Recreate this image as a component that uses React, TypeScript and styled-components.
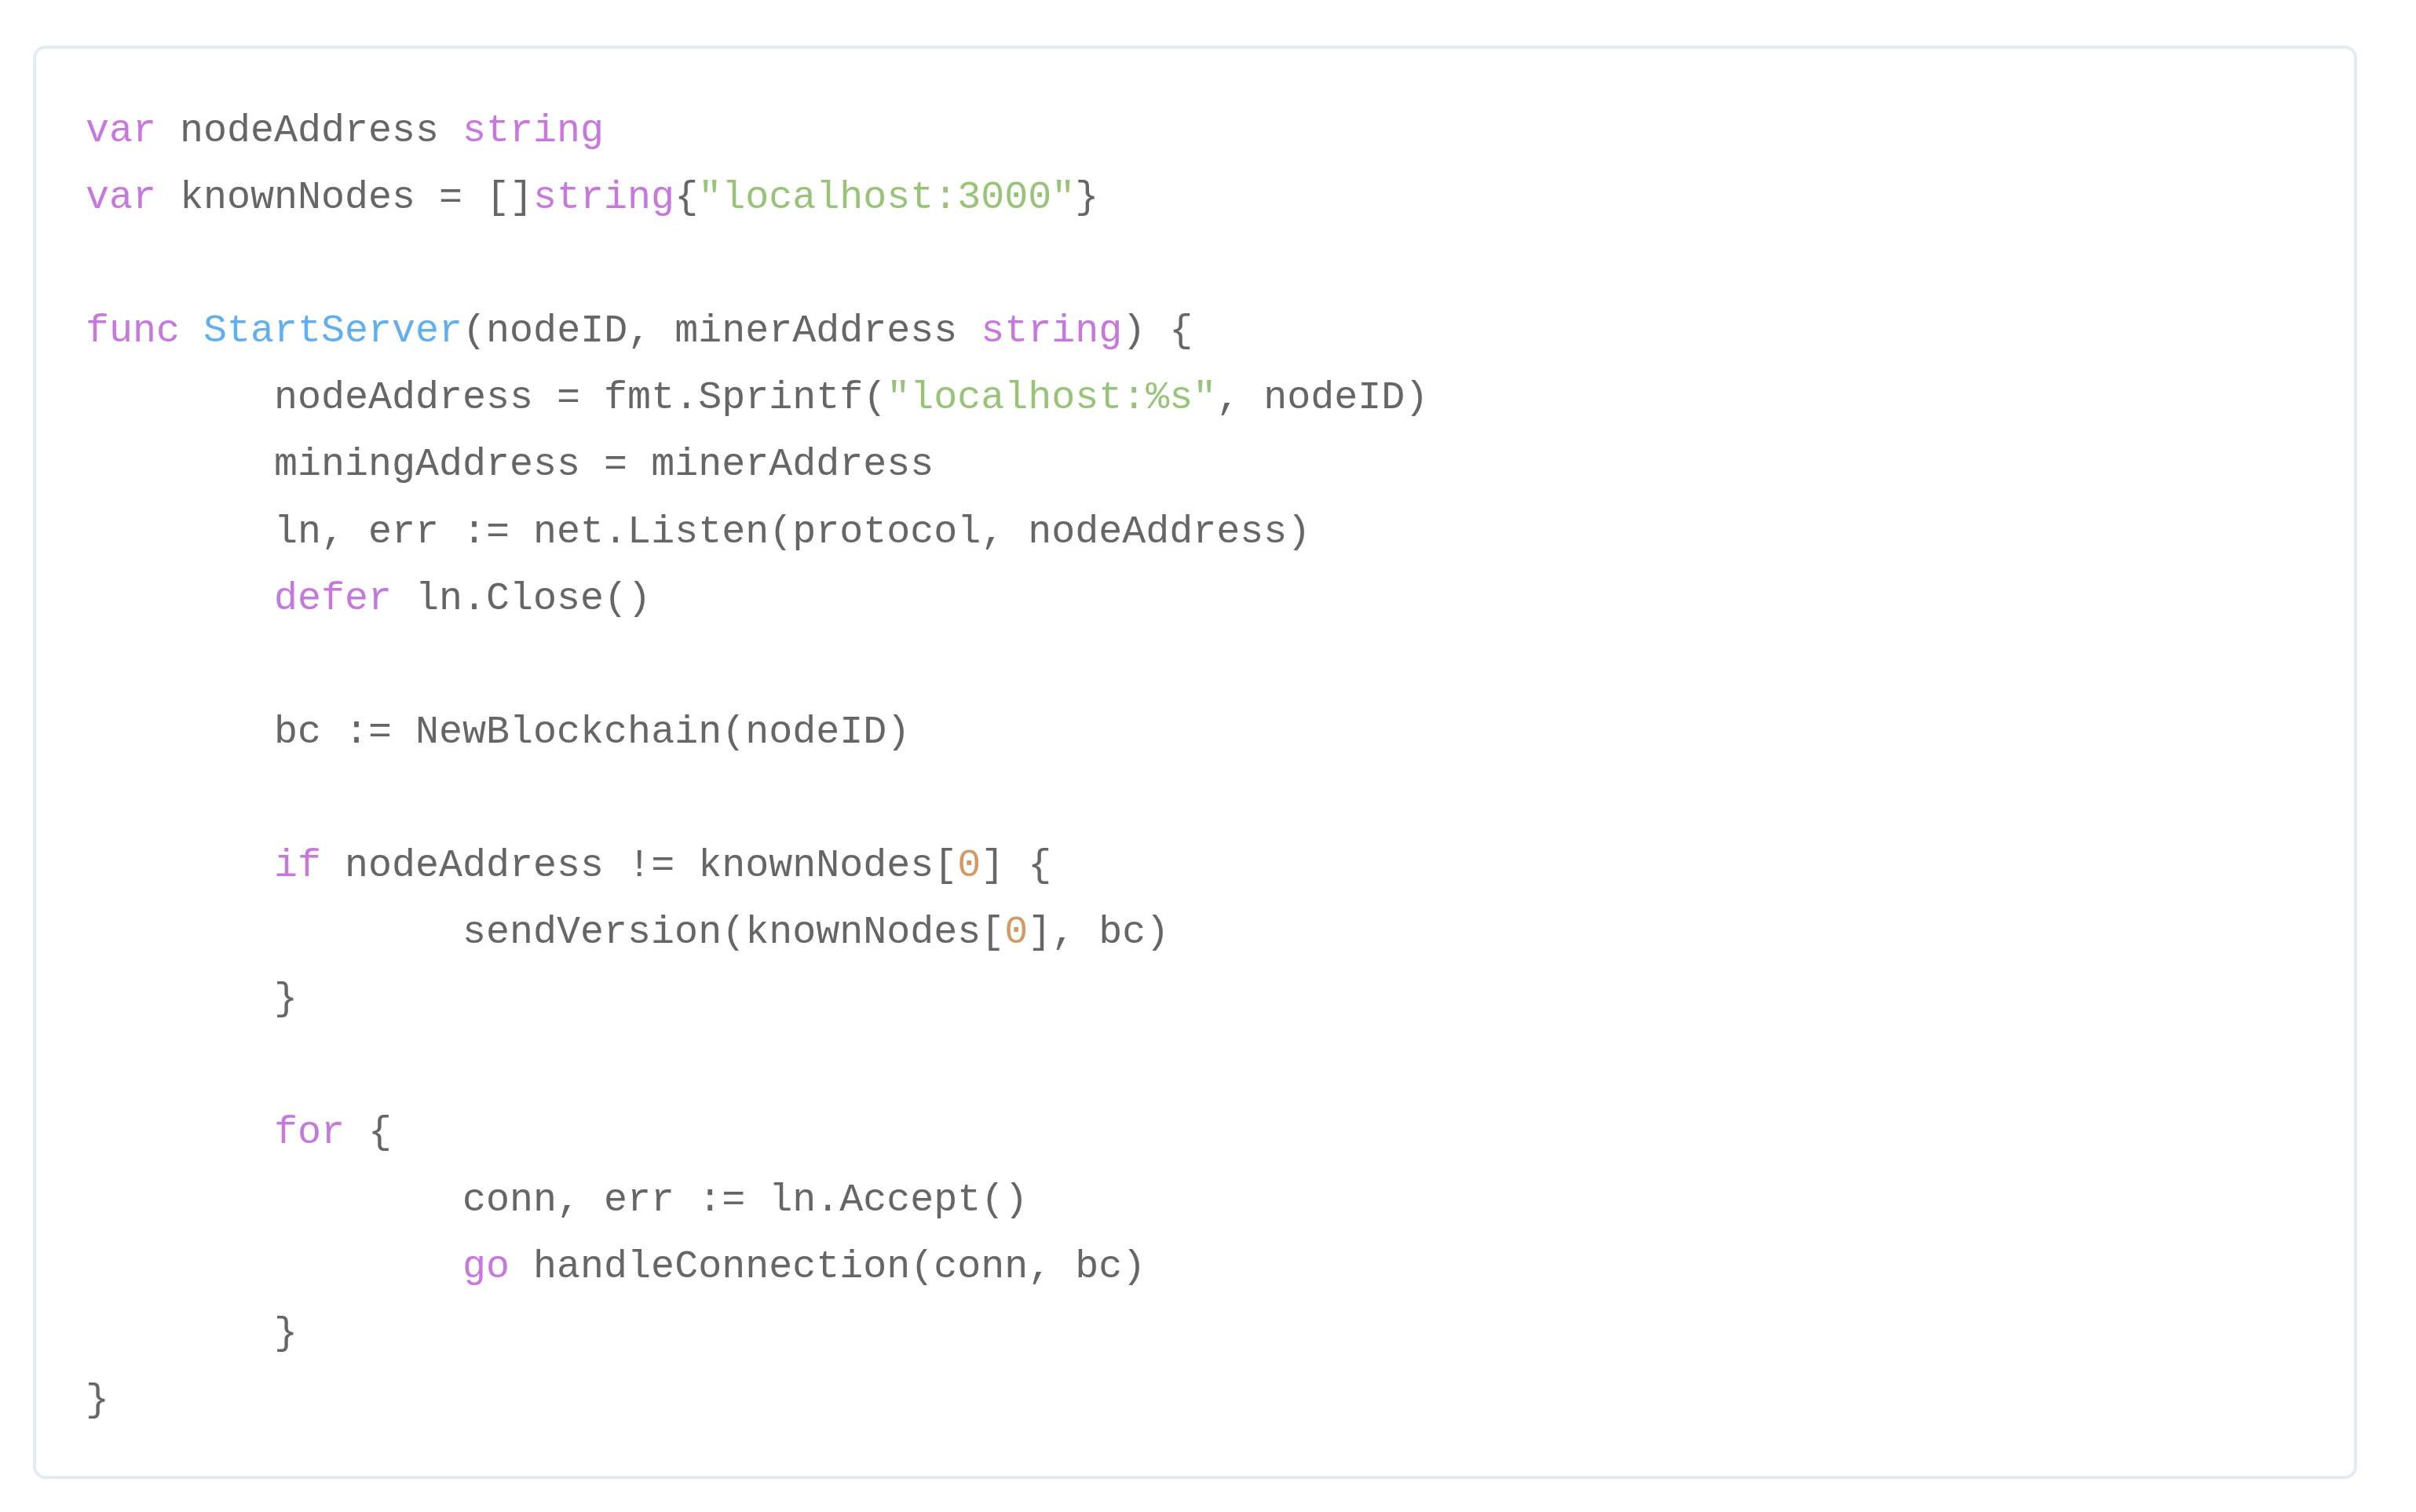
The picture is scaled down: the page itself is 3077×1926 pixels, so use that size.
import React from "react";
import styled, { createGlobalStyle } from "styled-components";

const GlobalStyle = createGlobalStyle`
  html, body {
    margin: 0;
    padding: 0;
    background: #ffffff;
  }
`;

const Page = styled.div`
  padding: 58px 75px 42px 42px;
  background: #ffffff;
`;

const CodeBox = styled.pre`
  margin: 0;
  border: 4px solid #e5ebf3;
  border-radius: 16px;
  background: #ffffff;
  padding: 62px 60px 54px 63px;
  font-family: "Courier New", "Nimbus Mono PS", "Nimbus Mono L", FreeMono, "Liberation Mono", monospace;
  font-size: 50px;
  line-height: 85.1px;
  color: #666666;
  white-space: pre;
  tab-size: 8;
  -moz-tab-size: 8;
  overflow: hidden;
`;

const Line = styled.div`
  height: 85.1px;
`;

type Kind = "plain" | "keyword" | "func" | "string" | "number";

const colors: Record<Kind, string> = {
  plain: "#666666",
  keyword: "#c678dd",
  func: "#61afef",
  string: "#98c379",
  number: "#d19a66",
};

const Token = styled.span<{ $kind: Kind }>`
  color: ${(p) => colors[p.$kind]};
`;

type Tok = [Kind, string];

const k = (s: string): Tok => ["keyword", s];
const p = (s: string): Tok => ["plain", s];
const f = (s: string): Tok => ["func", s];
const s = (t: string): Tok => ["string", t];
const n = (t: string): Tok => ["number", t];

const T = "\t";

const code: Tok[][] = [
  [k("var"), p(" nodeAddress "), k("string")],
  [k("var"), p(" knownNodes = []"), k("string"), p("{"), s('"localhost:3000"'), p("}")],
  [],
  [k("func"), p(" "), f("StartServer"), p("(nodeID, minerAddress "), k("string"), p(") {")],
  [p(T + "nodeAddress = fmt.Sprintf("), s('"localhost:%s"'), p(", nodeID)")],
  [p(T + "miningAddress = minerAddress")],
  [p(T + "ln, err := net.Listen(protocol, nodeAddress)")],
  [p(T), k("defer"), p(" ln.Close()")],
  [],
  [p(T + "bc := NewBlockchain(nodeID)")],
  [],
  [p(T), k("if"), p(" nodeAddress != knownNodes["), n("0"), p("] {")],
  [p(T + T + "sendVersion(knownNodes["), n("0"), p("], bc)")],
  [p(T + "}")],
  [],
  [p(T), k("for"), p(" {")],
  [p(T + T + "conn, err := ln.Accept()")],
  [p(T + T), k("go"), p(" handleConnection(conn, bc)")],
  [p(T + "}")],
  [p("}")],
];

export default function App() {
  return (
    <>
      <GlobalStyle />
      <Page>
        <CodeBox>
          {code.map((line, i) => (
            <Line key={i}>
              {line.map(([kind, text], j) => (
                <Token key={j} $kind={kind}>
                  {text}
                </Token>
              ))}
            </Line>
          ))}
        </CodeBox>
      </Page>
    </>
  );
}
